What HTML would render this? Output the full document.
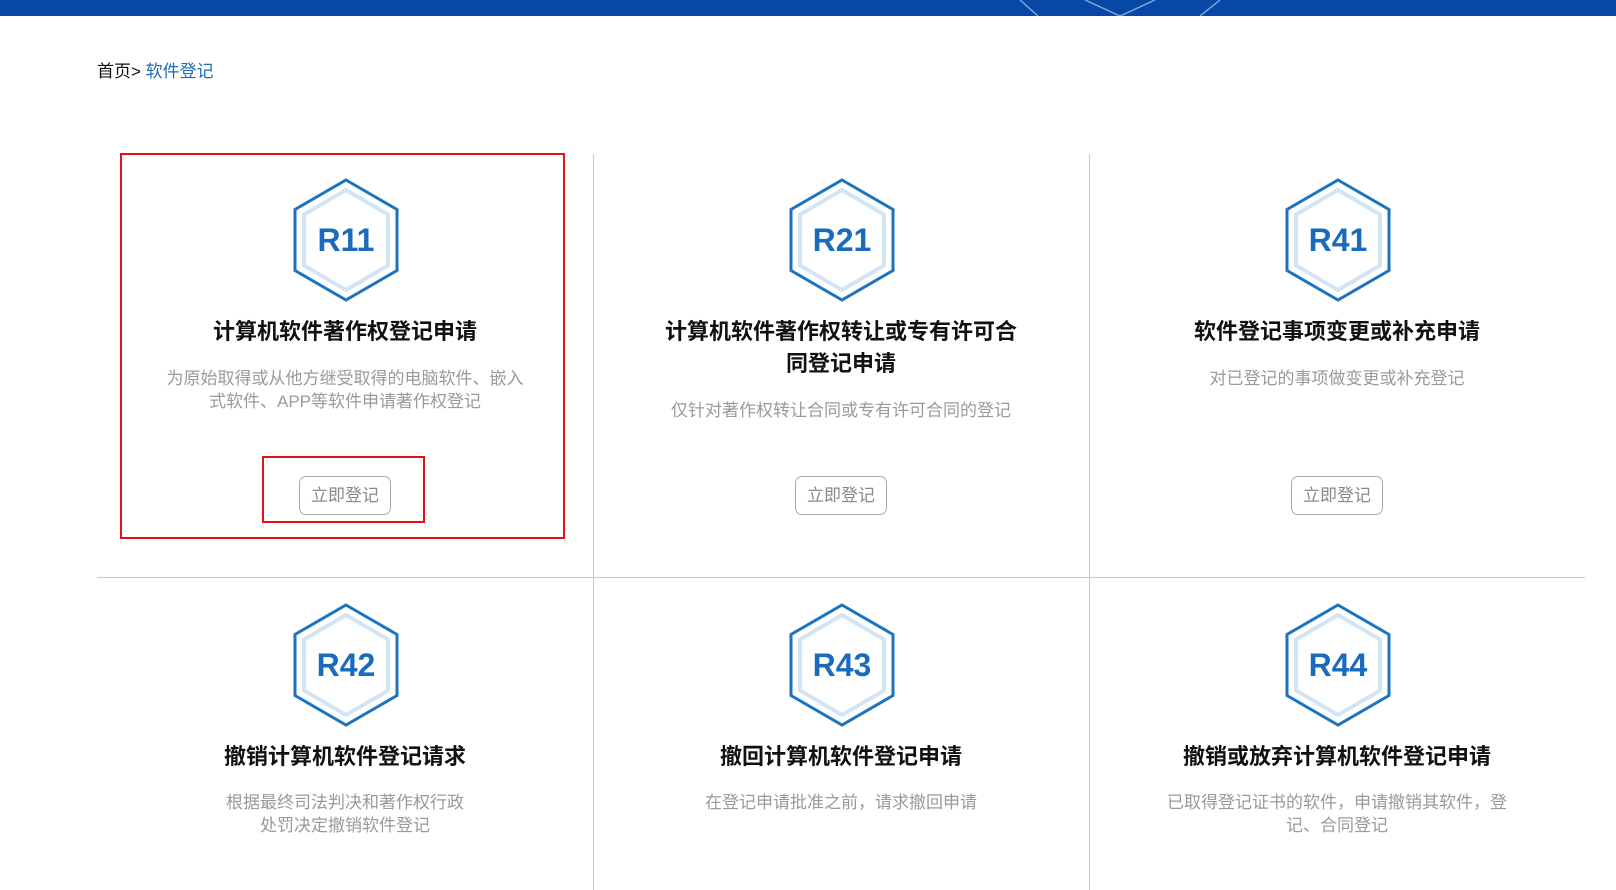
<!DOCTYPE html><html><head><meta charset="utf-8"><style>
body{margin:0;width:1616px;height:890px;position:relative;overflow:hidden;background:#fff;font-family:"Liberation Sans","Noto Sans CJK SC",sans-serif}
.a{position:absolute}
.bar{left:0;top:0;width:1616px;height:16px;background:#0747a6}
.vl{width:1px;background:#c8c8c8;top:154px;height:736px}
.cell{position:absolute;width:496px;text-align:center}
.hex{position:absolute;left:194px;width:110px;height:126px}
.hex span{position:absolute;left:0;right:0;top:45px;font-size:32px;font-weight:bold;color:#1a6bbd;font-family:"Liberation Sans",sans-serif}
.t{position:absolute;left:20px;right:20px;font-size:22px;font-weight:bold;color:#111;line-height:32px}
.d{position:absolute;font-size:17px;color:#9a9a9a;line-height:23px}
.btn{position:absolute;left:202px;width:92px;height:39px;border:1px solid #aaa;border-radius:7px;font-size:17px;color:#888;line-height:38px;box-sizing:border-box}
</style></head><body>
<div class="a bar"></div>
<svg class="a" style="left:1010px;top:0" width="230" height="16"><path d="M10 0 L28 16 M75 0 L110 16 L145 0 M210 0 L190 16" stroke="#7aa6d8" stroke-width="1.5" fill="none"/></svg>
<div class="a" style="left:97px;top:57px;font-size:17px;color:#111">首页&gt; <span style="color:#1a6bbd">软件登记</span></div>
<div class="a vl" style="left:593px"></div>
<div class="a vl" style="left:1089px"></div>
<div class="a" style="left:97px;top:577px;width:1488px;height:1px;background:#c8c8c8"></div>
<div class="a" style="left:120px;top:153px;width:441px;height:382px;border:2px solid #e2111b"></div>
<div class="a" style="left:262px;top:456px;width:163px;height:67px;border:2px solid #e2111b;box-sizing:border-box"></div>

<div class="cell" style="left:97px;top:0">
<svg class="hex" style="top:177px" viewBox="0 0 110 126"><polygon points="55,3 106,32.5 106,93.5 55,123 4,93.5 4,32.5" fill="none" stroke="#1e73be" stroke-width="3"/><polygon points="55,13 97,37.5 97,88.5 55,113 13,88.5 13,37.5" fill="none" stroke="#d3e5f5" stroke-width="4"/></svg>
<div class="hex" style="top:177px"><span>R11</span></div>
<div class="t" style="top:316px">计算机软件著作权登记申请</div>
<div class="d" style="top:367px;left:63px;right:63px">为原始取得或从他方继受取得的电脑软件、嵌入式软件、APP等软件申请著作权登记</div>
<div class="btn" style="top:476px">立即登记</div>
</div>
<div class="cell" style="left:593px;top:0">
<svg class="hex" style="top:177px" viewBox="0 0 110 126"><polygon points="55,3 106,32.5 106,93.5 55,123 4,93.5 4,32.5" fill="none" stroke="#1e73be" stroke-width="3"/><polygon points="55,13 97,37.5 97,88.5 55,113 13,88.5 13,37.5" fill="none" stroke="#d3e5f5" stroke-width="4"/></svg>
<div class="hex" style="top:177px"><span>R21</span></div>
<div class="t" style="top:316px;left:65px;right:65px">计算机软件著作权转让或专有许可合同登记申请</div>
<div class="d" style="top:399px;left:10px;right:10px">仅针对著作权转让合同或专有许可合同的登记</div>
<div class="btn" style="top:476px">立即登记</div>
</div>
<div class="cell" style="left:1089px;top:0">
<svg class="hex" style="top:177px" viewBox="0 0 110 126"><polygon points="55,3 106,32.5 106,93.5 55,123 4,93.5 4,32.5" fill="none" stroke="#1e73be" stroke-width="3"/><polygon points="55,13 97,37.5 97,88.5 55,113 13,88.5 13,37.5" fill="none" stroke="#d3e5f5" stroke-width="4"/></svg>
<div class="hex" style="top:177px"><span>R41</span></div>
<div class="t" style="top:316px">软件登记事项变更或补充申请</div>
<div class="d" style="top:367px;left:10px;right:10px">对已登记的事项做变更或补充登记</div>
<div class="btn" style="top:476px">立即登记</div>
</div>

<div class="cell" style="left:97px;top:0">
<svg class="hex" style="top:602px" viewBox="0 0 110 126"><polygon points="55,3 106,32.5 106,93.5 55,123 4,93.5 4,32.5" fill="none" stroke="#1e73be" stroke-width="3"/><polygon points="55,13 97,37.5 97,88.5 55,113 13,88.5 13,37.5" fill="none" stroke="#d3e5f5" stroke-width="4"/></svg>
<div class="hex" style="top:602px"><span>R42</span></div>
<div class="t" style="top:741px">撤销计算机软件登记请求</div>
<div class="d" style="top:791px;left:125px;right:125px">根据最终司法判决和著作权行政处罚决定撤销软件登记</div>
</div>
<div class="cell" style="left:593px;top:0">
<svg class="hex" style="top:602px" viewBox="0 0 110 126"><polygon points="55,3 106,32.5 106,93.5 55,123 4,93.5 4,32.5" fill="none" stroke="#1e73be" stroke-width="3"/><polygon points="55,13 97,37.5 97,88.5 55,113 13,88.5 13,37.5" fill="none" stroke="#d3e5f5" stroke-width="4"/></svg>
<div class="hex" style="top:602px"><span>R43</span></div>
<div class="t" style="top:741px">撤回计算机软件登记申请</div>
<div class="d" style="top:791px;left:10px;right:10px">在登记申请批准之前，请求撤回申请</div>
</div>
<div class="cell" style="left:1089px;top:0">
<svg class="hex" style="top:602px" viewBox="0 0 110 126"><polygon points="55,3 106,32.5 106,93.5 55,123 4,93.5 4,32.5" fill="none" stroke="#1e73be" stroke-width="3"/><polygon points="55,13 97,37.5 97,88.5 55,113 13,88.5 13,37.5" fill="none" stroke="#d3e5f5" stroke-width="4"/></svg>
<div class="hex" style="top:602px"><span>R44</span></div>
<div class="t" style="top:741px">撤销或放弃计算机软件登记申请</div>
<div class="d" style="top:791px;left:70px;right:70px">已取得登记证书的软件，申请撤销其软件，登记、合同登记</div>
</div>
</body></html>
